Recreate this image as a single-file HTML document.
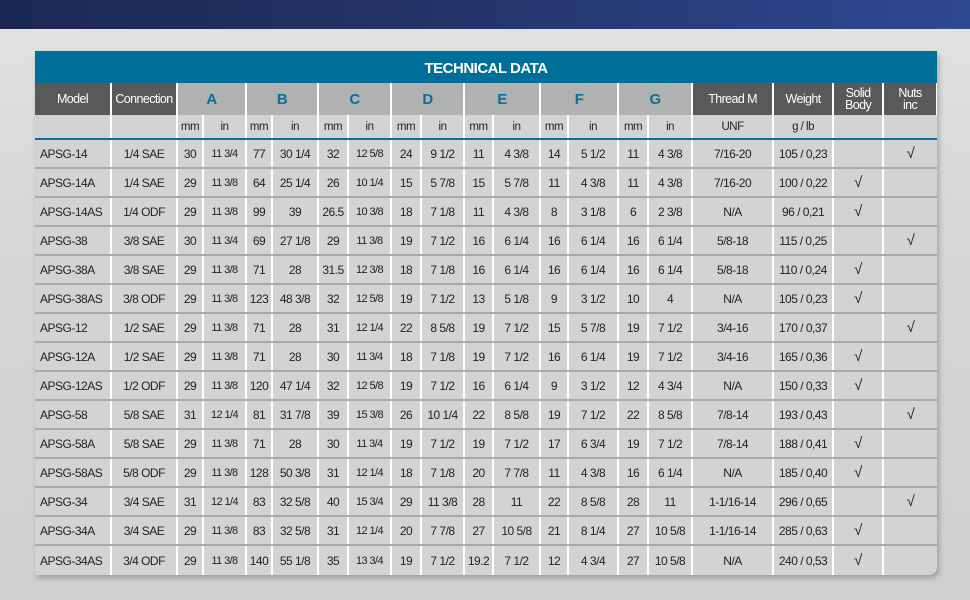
<!DOCTYPE html>
<html><head><meta charset="utf-8"><style>
html,body{margin:0;padding:0}
body{width:970px;height:600px;position:relative;overflow:hidden;background:linear-gradient(180deg,#e2e3e3 0%,#d6d7d7 40%,#cfd0d0 100%);font-family:"Liberation Sans",sans-serif}
.top{position:absolute;left:0;top:0;width:970px;height:29px;background:linear-gradient(90deg,#1c2753 0%,#243265 40%,#2e4892 100%)}
.card{position:absolute;left:35px;top:51px;width:902px;background:#d2d3d5;border-bottom-right-radius:8px;box-shadow:2px 3px 6px rgba(0,0,0,.25);overflow:hidden}
.title{height:32px;background:#006f97;color:#fff;text-align:center;font:bold 15px/35px "Liberation Sans",sans-serif;letter-spacing:-0.5px}
table{border-collapse:collapse;table-layout:fixed;width:902px}
td{padding:0;text-align:center;font-size:12px;letter-spacing:-0.5px;color:#222;border-right:2px solid #fff;white-space:nowrap;overflow:hidden}
td:last-child{border-right:none}
tr.h td{height:32px;background:#b0b1b1;color:#0a6f9a;font:bold 15px "Liberation Sans",sans-serif;border-right:2px solid #fff}
tr.h td.d{background:#59595b;color:#fff;font:12.5px "Liberation Sans",sans-serif;letter-spacing:-0.6px}
tr.h td.d2{line-height:12px;font-size:12.5px}
tr.s td{height:23px;font-size:11.5px;border-bottom:2px solid #0a6f9a}
tr.r td{height:27px;border-bottom:2px solid #a9aaab}
tr.r:last-child td{border-bottom:none;height:29px}
td.l{text-align:left;padding-left:5px}
td.sm{font-size:11px;letter-spacing:-0.6px}
td.c{font-size:15px}
</style></head><body>
<div class="top"></div>
<div class="card">
<div class="title">TECHNICAL DATA</div>
<table>
<colgroup><col style="width:76px"><col style="width:66px"><col style="width:26px"><col style="width:43px"><col style="width:26px"><col style="width:46px"><col style="width:30px"><col style="width:43px"><col style="width:30px"><col style="width:43px"><col style="width:29px"><col style="width:47px"><col style="width:28px"><col style="width:50px"><col style="width:30px"><col style="width:44px"><col style="width:81px"><col style="width:60px"><col style="width:50px"><col style="width:54px"></colgroup>
<tr class="h"><td class="d">Model</td><td class="d">Connection</td><td colspan="2">A</td><td colspan="2">B</td><td colspan="2">C</td><td colspan="2">D</td><td colspan="2">E</td><td colspan="2">F</td><td colspan="2">G</td><td class="d">Thread M</td><td class="d">Weight</td><td class="d d2">Solid<br>Body</td><td class="d d2">Nuts<br>inc</td></tr>
<tr class="s"><td></td><td></td><td>mm</td><td>in</td><td>mm</td><td>in</td><td>mm</td><td>in</td><td>mm</td><td>in</td><td>mm</td><td>in</td><td>mm</td><td>in</td><td>mm</td><td>in</td><td>UNF</td><td>g / lb</td><td></td><td></td></tr>
<tr class="r"><td class="l">APSG-14</td><td>1/4 SAE</td><td>30</td><td class="sm">11 3/4</td><td>77</td><td>30 1/4</td><td>32</td><td class="sm">12 5/8</td><td>24</td><td>9 1/2</td><td>11</td><td>4 3/8</td><td>14</td><td>5 1/2</td><td>11</td><td>4 3/8</td><td>7/16-20</td><td>105 / 0,23</td><td></td><td class="c">√</td></tr>
<tr class="r"><td class="l">APSG-14A</td><td>1/4 SAE</td><td>29</td><td class="sm">11 3/8</td><td>64</td><td>25 1/4</td><td>26</td><td class="sm">10 1/4</td><td>15</td><td>5 7/8</td><td>15</td><td>5 7/8</td><td>11</td><td>4 3/8</td><td>11</td><td>4 3/8</td><td>7/16-20</td><td>100 / 0,22</td><td class="c">√</td><td></td></tr>
<tr class="r"><td class="l">APSG-14AS</td><td>1/4 ODF</td><td>29</td><td class="sm">11 3/8</td><td>99</td><td>39</td><td>26.5</td><td class="sm">10 3/8</td><td>18</td><td>7 1/8</td><td>11</td><td>4 3/8</td><td>8</td><td>3 1/8</td><td>6</td><td>2 3/8</td><td>N/A</td><td>96 / 0,21</td><td class="c">√</td><td></td></tr>
<tr class="r"><td class="l">APSG-38</td><td>3/8 SAE</td><td>30</td><td class="sm">11 3/4</td><td>69</td><td>27 1/8</td><td>29</td><td class="sm">11 3/8</td><td>19</td><td>7 1/2</td><td>16</td><td>6 1/4</td><td>16</td><td>6 1/4</td><td>16</td><td>6 1/4</td><td>5/8-18</td><td>115 / 0,25</td><td></td><td class="c">√</td></tr>
<tr class="r"><td class="l">APSG-38A</td><td>3/8 SAE</td><td>29</td><td class="sm">11 3/8</td><td>71</td><td>28</td><td>31.5</td><td class="sm">12 3/8</td><td>18</td><td>7 1/8</td><td>16</td><td>6 1/4</td><td>16</td><td>6 1/4</td><td>16</td><td>6 1/4</td><td>5/8-18</td><td>110 / 0,24</td><td class="c">√</td><td></td></tr>
<tr class="r"><td class="l">APSG-38AS</td><td>3/8 ODF</td><td>29</td><td class="sm">11 3/8</td><td>123</td><td>48 3/8</td><td>32</td><td class="sm">12 5/8</td><td>19</td><td>7 1/2</td><td>13</td><td>5 1/8</td><td>9</td><td>3 1/2</td><td>10</td><td>4</td><td>N/A</td><td>105 / 0,23</td><td class="c">√</td><td></td></tr>
<tr class="r"><td class="l">APSG-12</td><td>1/2 SAE</td><td>29</td><td class="sm">11 3/8</td><td>71</td><td>28</td><td>31</td><td class="sm">12 1/4</td><td>22</td><td>8 5/8</td><td>19</td><td>7 1/2</td><td>15</td><td>5 7/8</td><td>19</td><td>7 1/2</td><td>3/4-16</td><td>170 / 0,37</td><td></td><td class="c">√</td></tr>
<tr class="r"><td class="l">APSG-12A</td><td>1/2 SAE</td><td>29</td><td class="sm">11 3/8</td><td>71</td><td>28</td><td>30</td><td class="sm">11 3/4</td><td>18</td><td>7 1/8</td><td>19</td><td>7 1/2</td><td>16</td><td>6 1/4</td><td>19</td><td>7 1/2</td><td>3/4-16</td><td>165 / 0,36</td><td class="c">√</td><td></td></tr>
<tr class="r"><td class="l">APSG-12AS</td><td>1/2 ODF</td><td>29</td><td class="sm">11 3/8</td><td>120</td><td>47 1/4</td><td>32</td><td class="sm">12 5/8</td><td>19</td><td>7 1/2</td><td>16</td><td>6 1/4</td><td>9</td><td>3 1/2</td><td>12</td><td>4 3/4</td><td>N/A</td><td>150 / 0,33</td><td class="c">√</td><td></td></tr>
<tr class="r"><td class="l">APSG-58</td><td>5/8 SAE</td><td>31</td><td class="sm">12 1/4</td><td>81</td><td>31 7/8</td><td>39</td><td class="sm">15 3/8</td><td>26</td><td>10 1/4</td><td>22</td><td>8 5/8</td><td>19</td><td>7 1/2</td><td>22</td><td>8 5/8</td><td>7/8-14</td><td>193 / 0,43</td><td></td><td class="c">√</td></tr>
<tr class="r"><td class="l">APSG-58A</td><td>5/8 SAE</td><td>29</td><td class="sm">11 3/8</td><td>71</td><td>28</td><td>30</td><td class="sm">11 3/4</td><td>19</td><td>7 1/2</td><td>19</td><td>7 1/2</td><td>17</td><td>6 3/4</td><td>19</td><td>7 1/2</td><td>7/8-14</td><td>188 / 0,41</td><td class="c">√</td><td></td></tr>
<tr class="r"><td class="l">APSG-58AS</td><td>5/8 ODF</td><td>29</td><td class="sm">11 3/8</td><td>128</td><td>50 3/8</td><td>31</td><td class="sm">12 1/4</td><td>18</td><td>7 1/8</td><td>20</td><td>7 7/8</td><td>11</td><td>4 3/8</td><td>16</td><td>6 1/4</td><td>N/A</td><td>185 / 0,40</td><td class="c">√</td><td></td></tr>
<tr class="r"><td class="l">APSG-34</td><td>3/4 SAE</td><td>31</td><td class="sm">12 1/4</td><td>83</td><td>32 5/8</td><td>40</td><td class="sm">15 3/4</td><td>29</td><td>11 3/8</td><td>28</td><td>11</td><td>22</td><td>8 5/8</td><td>28</td><td>11</td><td>1-1/16-14</td><td>296 / 0,65</td><td></td><td class="c">√</td></tr>
<tr class="r"><td class="l">APSG-34A</td><td>3/4 SAE</td><td>29</td><td class="sm">11 3/8</td><td>83</td><td>32 5/8</td><td>31</td><td class="sm">12 1/4</td><td>20</td><td>7 7/8</td><td>27</td><td>10 5/8</td><td>21</td><td>8 1/4</td><td>27</td><td>10 5/8</td><td>1-1/16-14</td><td>285 / 0,63</td><td class="c">√</td><td></td></tr>
<tr class="r"><td class="l">APSG-34AS</td><td>3/4 ODF</td><td>29</td><td class="sm">11 3/8</td><td>140</td><td>55 1/8</td><td>35</td><td class="sm">13 3/4</td><td>19</td><td>7 1/2</td><td>19.2</td><td>7 1/2</td><td>12</td><td>4 3/4</td><td>27</td><td>10 5/8</td><td>N/A</td><td>240 / 0,53</td><td class="c">√</td><td></td></tr>
</table>
</div>
</body></html>
